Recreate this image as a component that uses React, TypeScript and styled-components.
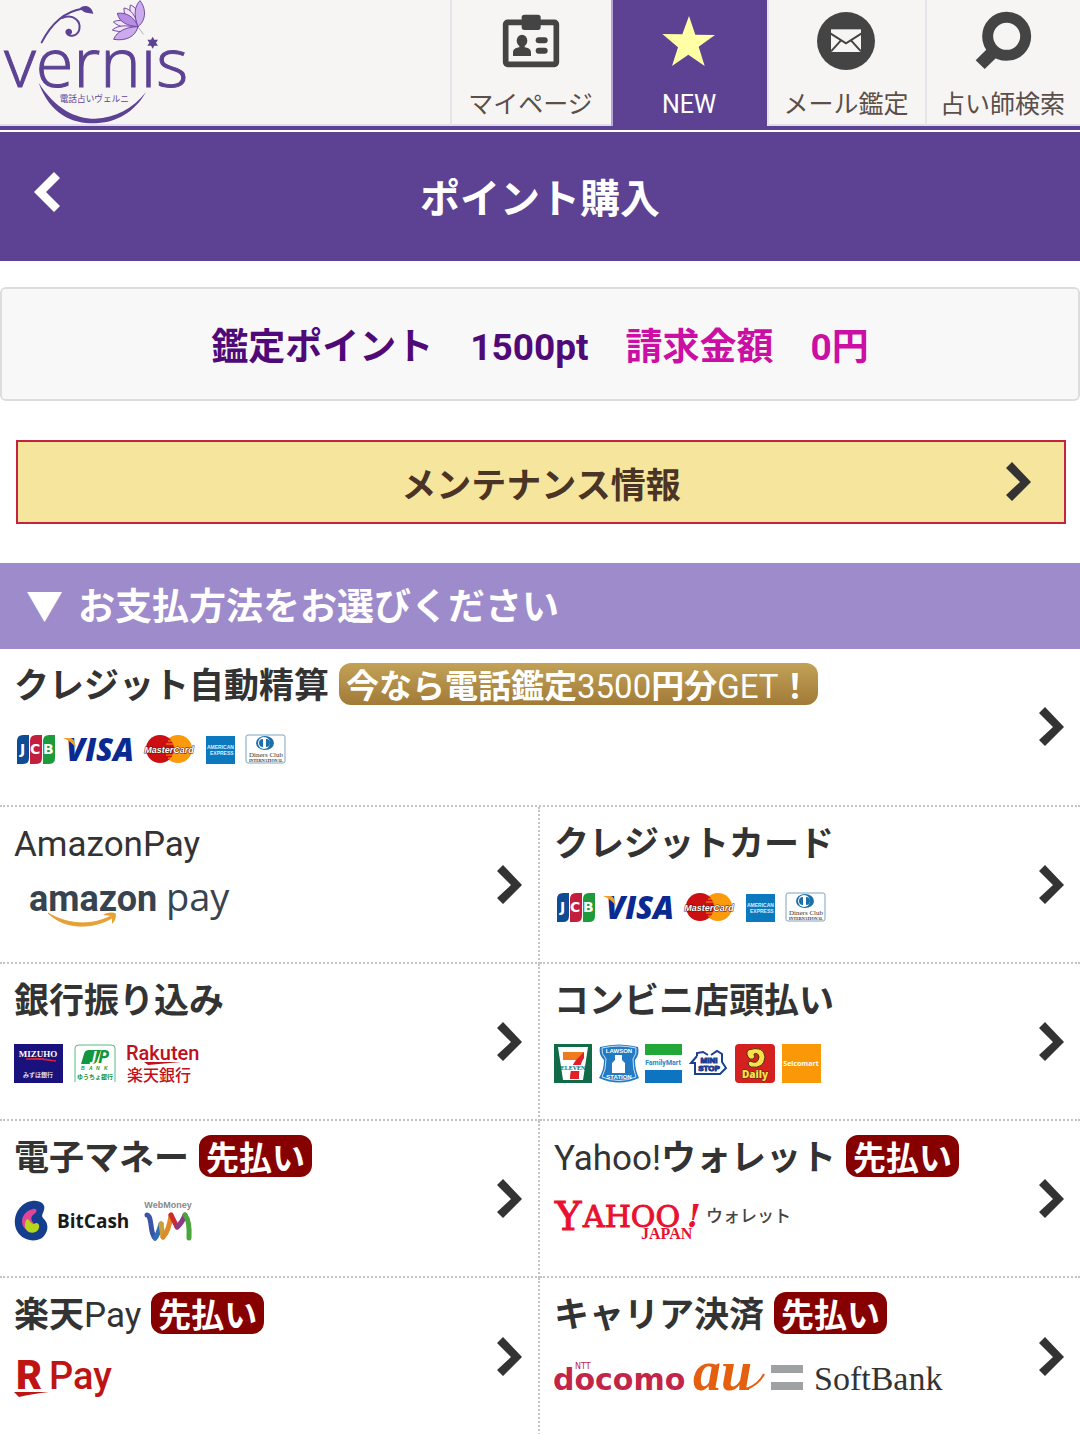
import type { FC, ReactNode } from "react";
import styled, { createGlobalStyle } from "styled-components";

const GlobalStyle = createGlobalStyle`
  * {
    box-sizing: border-box;
  }
  body {
    margin: 0;
    background: #fff;
    color: #333;
    font-family: Roboto, "Noto Sans CJK JP", sans-serif;
  }
  a {
    color: inherit;
    text-decoration: none;
  }
  svg {
    display: block;
    flex: none;
    overflow: visible;
  }
`;

const Header = styled.header`
  display: grid;
  grid-template-columns: 450fr 161fr 156fr 158fr 155fr;
  background: #f6f5f4;
  border-bottom: 4px solid #5d4294;
  margin-bottom: 2px;
`;

const LogoLink = styled.a`
  box-shadow: inset 0 -2px #e0dcec;
`;

const NavItem = styled.a<{ $active?: boolean }>`
  display: flex;
  flex-direction: column;
  align-items: center;
  gap: 20px;
  padding: 12px 2px 6px 0;
  font-size: 25px;
  line-height: 30px;
  white-space: nowrap;
  color: ${(p) => (p.$active ? "#fff" : "#5a4f4a")};
  background: ${(p) => (p.$active ? "#5d4294" : "#f6f5f4")};
  border-left: 2px solid ${(p) => (p.$active ? "#b3a6d2" : "#e6e4e8")};
  box-shadow: ${(p) => (p.$active ? "none" : "inset 0 -2px #e0dcec")};
`;

const TitleBar = styled.div`
  display: grid;
  grid-template-columns: 60px 1fr 60px;
  align-items: center;
  padding: 0 4px;
  height: 129px;
  background: #5d4294;
  color: #fff;
`;

const BackButton = styled.button`
  display: flex;
  align-items: center;
  justify-content: flex-end;
  padding: 0 4px 10px 0;
  border: 0;
  background: none;
  color: inherit;
`;

const PageTitle = styled.h1`
  margin: 0;
  padding-top: 6px;
  text-align: center;
  font-size: 40px;
  line-height: 60px;
`;

const PointBox = styled.p`
  margin: 26px 0 39px;
  padding: 32px 0 24px;
  border: 2px solid #ddd;
  border-radius: 6px;
  background: #f8f8f8;
  text-align: center;
  font-size: 37px;
  line-height: 54px;
  font-weight: 700;
  color: #500a78;
`;

const Amount = styled.span`
  color: #cc0fa4;
`;

const MaintenanceLink = styled.a`
  display: grid;
  grid-template-columns: 58px 1fr 58px;
  align-items: center;
  margin: 0 14px 39px 16px;
  height: 84px;
  border: 2px solid #c4233f;
  background: #f6e59d;
  color: #4a3426;
  font-size: 35px;
  font-weight: 700;
  text-align: center;
`;

const SectionTitle = styled.h2`
  display: flex;
  gap: 15px;
  margin: 0;
  padding: 4px 26px 0;
  background: #9e8bcb;
  color: #fff;
  font-size: 37px;
  line-height: 82px;
`;

const MethodGrid = styled.nav`
  display: grid;
  grid-template-columns: 1fr 1fr;
`;

const MethodLink = styled.a<{ $wide?: boolean }>`
  display: flex;
  align-items: center;
  justify-content: space-between;
  height: ${(p) => (p.$wide ? 158 : 157)}px;
  padding: 0 15px 0 14px;
  border-bottom: 2px dotted #c4c4c4;
  grid-column: ${(p) => (p.$wide ? "1 / -1" : "auto")};

  &:nth-child(even) {
    border-right: 2px dotted #c4c4c4;
  }
  &:nth-last-child(-n + 2) {
    border-bottom: 0;
  }
`;

const MethodBody = styled.div`
  align-self: flex-start;
  display: flex;
  flex-direction: column;
  gap: 20px;
  padding-top: 14px;
`;

const MethodTitle = styled.div`
  display: flex;
  gap: 10px;
  font-size: 35px;
  line-height: 36px;
  font-weight: 700;
  white-space: nowrap;
`;

const Name = styled.span`
  padding-top: 6px;
`;

const Latin = styled.span`
  font-weight: 400;
`;

const Badge = styled.span<{ $gold?: boolean }>`
  padding: 6px 7px 0;
  border-radius: 12px;
  background: ${(p) =>
    p.$gold ? "linear-gradient(#c2a257, #a17a38)" : "#870000"};
  color: #fff;
  font-size: 33px;
`;

const Arrow: FC<{ back?: boolean; color?: string }> = ({
  back,
  color = "#333",
}) => (
  <svg width="26" height="40" viewBox="0 0 26 40" aria-hidden="true">
    <polygon
      points={
        back
          ? "26,6 20,0 0,20 20,40 26,34 12,20"
          : "0,6 6,0 25,20 6,39 0,33 14,20"
      }
      fill={color}
    />
  </svg>
);

const VernisLogo = () => (
  <svg width="190" height="126" viewBox="0 0 570 378" role="img" aria-label="vernis">
    <g fill="none" stroke="#5d4294" strokeLinecap="round">
      <path d="M125 127C147 84 186 36 246 26" strokeWidth="6" />
      <path d="M186 54C222 40 243 64 238 88C233 112 200 112 199 96C200 86 213 88 213 97" strokeWidth="6" />
    </g>
    <circle cx="207" cy="97" r="8" fill="#5d4294" />
    <path d="M240 24C252 12 276 17 280 42C266 38 252 42 240 24Z" fill="#5d4294" />
    <g fill="#cda9ee" stroke="#6b4da0" strokeWidth="3" strokeLinejoin="round">
      <path d="M414 80C396 62 386 40 391 15C402 18 410 28 414 42Z" fill="#f4e2fb" />
      <path d="M414 80C390 74 370 50 372 24C392 26 408 48 414 80Z" fill="#f4e2fb" />
      <path d="M414 80C400 44 404 18 420 2C438 24 440 60 414 80Z" />
      <path d="M414 80C386 88 358 82 340 66C350 60 364 60 376 66Z" fill="#f4e2fb" />
      <path d="M414 80C390 98 360 98 337 90C348 80 366 76 384 78Z" fill="#f4e2fb" />
      <path d="M414 80C384 78 358 68 352 40C380 36 404 52 414 80Z" fill="#b98ce4" />
      <path d="M414 80C406 110 378 124 341 118C350 94 380 80 414 80Z" />
    </g>
    <path d="M414 80L430 103" stroke="#9a8aaa" strokeWidth="2" />
    <text x="13" y="262" fontFamily="Open Sans" fontWeight="300" fontSize="206" fill="#5d4294" stroke="#5d4294" strokeWidth="3">
      vernıs
    </text>
    <path d="M458 110l5 9h11l-6 9 6 9h-11l-5 9-5-9h-11l6-9-6-9h11z" fill="#5d4294" />
    <text x="179" y="306" fontSize="26" fill="#5d4294">
      電話占いヴェルニ
    </text>
    <path d="M116 248C150 345 220 371 285 370C350 368 405 335 438 276C400 325 345 354 285 356C225 356 165 325 116 248Z" fill="#5d4294" />
  </svg>
);

const MyPageIcon = () => (
  <svg width="58" height="58" viewBox="0 0 174 174" fill="#444" aria-hidden="true">
    <rect x="11" y="31" width="152" height="126" rx="6" fill="none" stroke="#444" strokeWidth="17" />
    <rect x="59" y="8" width="57" height="46" rx="8" />
    <ellipse cx="60" cy="86" rx="16" ry="18" />
    <path d="M33 132V122C33 112 40 108 52 106V96H68V106C80 108 87 112 87 122V132Z" />
    <rect x="101" y="76" width="36" height="18" rx="9" />
    <rect x="101" y="107" width="36" height="18" rx="9" />
  </svg>
);

const StarIcon = () => (
  <svg width="58" height="58" viewBox="0 0 174 174" aria-hidden="true">
    <polygon
      points="87,12 106,68 165,69 116,104 134,162 85,128 36,162 54,106 7,66 67,67"
      fill="#ffffa6"
    />
  </svg>
);

const MailIcon = () => (
  <svg width="58" height="58" viewBox="0 0 174 174" aria-hidden="true">
    <circle cx="87" cy="87" r="87" fill="#444" />
    <rect x="42" y="52" width="90" height="68" fill="#f6f5f4" />
    <path d="M40 64L87 94L134 64M42 118L72 85M132 118L102 85" fill="none" stroke="#444" strokeWidth="6" />
  </svg>
);

const SearchIcon = () => (
  <svg width="58" height="58" viewBox="0 0 174 174" aria-hidden="true">
    <circle cx="98" cy="73" r="57" fill="none" stroke="#444" strokeWidth="33" />
    <polygon points="5,145 32,171 70,134 42,108" fill="#444" />
  </svg>
);

const CardLogos = () => (
  <svg width="274" height="44" viewBox="0 0 274 44" role="img" aria-label="JCB VISA MasterCard American Express Diners Club">
    <path d="M3 16Q3 10 9 10H15V33Q15 39 9 39H3Z" fill="#0e4c96" />
    <path d="M16 16Q16 10 22 10H28V33Q28 39 22 39H16Z" fill="#c41e3f" />
    <path d="M29 16Q29 10 35 10H41V33Q41 39 35 39H29Z" fill="#1d9a3a" />
    <text y="29" fontFamily="DejaVu Sans" fontWeight="700" fontSize="14" fill="#fff">
      <tspan x="6">J</tspan>
      <tspan x="16">C</tspan>
      <tspan x="29">B</tspan>
    </text>
    <text x="52" y="36" fontFamily="Open Sans" fontWeight="800" fontStyle="italic" fontSize="31" fill="#0a2a92">
      VISA
    </text>
    <path d="M49 13H57Q60 14 61 19L62 23Q57 16 49 13Z" fill="#f0a028" />
    <circle cx="164" cy="24" r="14" fill="#fb9a0a" />
    <circle cx="146" cy="24" r="14" fill="#cc0f12" />
    <path d="M154 16h7M152 19h8M152 30h8M154 33h7" stroke="#fb9a0a" strokeWidth="1" />
    <text x="155" y="28" textAnchor="middle" fontFamily="Liberation Sans" fontWeight="700" fontStyle="italic" fontSize="9" fill="#fff" stroke="#5c1200" strokeWidth="1" paintOrder="stroke">
      MasterCard
    </text>
    <rect x="192" y="11" width="29" height="28" fill="#0c78be" />
    <g fontFamily="Liberation Sans" fontWeight="700" fontSize="5" fill="#d9efff">
      <text x="193" y="24">AMERICAN</text>
      <text x="196" y="30">EXPRESS</text>
    </g>
    <rect x="232" y="10" width="39" height="28" rx="2" fill="#fff" stroke="#7fa3bf" />
    <ellipse cx="251" cy="18" rx="9" ry="7" fill="#1b70aa" />
    <circle cx="250" cy="18" r="6" fill="#fff" />
    <path d="M249 14A4 4 0 0 0 249 22ZM252 14A4 4 0 0 1 252 22Z" fill="#1b70aa" />
    <text x="252" y="32" textAnchor="middle" fontFamily="Liberation Serif" fontSize="7" fill="#333">
      Diners Club
    </text>
    <text x="252" y="37" textAnchor="middle" fontFamily="Liberation Serif" fontWeight="700" fontSize="4" fill="#333">
      INTERNATIONAL
    </text>
  </svg>
);

const AmazonPayLogo = () => (
  <svg width="222" height="44" viewBox="0 0 222 44" role="img" aria-label="amazon pay">
    <text x="15" y="28" fontWeight="700" fontSize="36" fill="#37434f">
      amazon
    </text>
    <text x="152" y="28" fontFamily="Open Sans" fontSize="38" fill="#37434f">
      pay
    </text>
    <path d="M34 30C52 41 76 44 97 33L98 35C77 47 50 46 34 30Z" fill="#e8a033" stroke="#e8a033" />
    <path d="M89 32C94 29 99 29 102 31C102 35 101 38 98 41L98 33Z" fill="#e8a033" />
  </svg>
);

const BankLogos = () => (
  <svg width="190" height="44" viewBox="0 0 190 44" role="img" aria-label="みずほ銀行 ゆうちょ銀行 楽天銀行">
    <rect y="4" width="49" height="39" fill="#19127c" />
    <text x="24" y="17" textAnchor="middle" fontFamily="Liberation Serif" fontWeight="700" fontSize="9" fill="#fff">
      MIZUHO
    </text>
    <path d="M12 19Q28 17 42 21Q28 19 12 19Z" fill="#e0203c" stroke="#e0203c" />
    <text x="24" y="37" textAnchor="middle" fontSize="6" fontWeight="500" fill="#fff">
      みずほ銀行
    </text>
    <path d="M61 42V8Q61 5 65 5H97Q101 5 101 8V42" fill="none" stroke="#5cb97e" />
    <path d="M70 14Q71 10 75 10H87L83 21Q82 24 78 24H67Z" fill="#12963f" />
    <g fontFamily="Open Sans" fontWeight="700" fontStyle="italic">
      <text x="78" y="21" fontSize="14" fill="#fff">
        J
      </text>
      <text x="84" y="23" fontSize="18" fill="#12963f">
        P
      </text>
    </g>
    <g fontFamily="Liberation Sans" fontWeight="700" fontStyle="italic" fontSize="5" fill="#12963f">
      <text x="67" y="30">B</text>
      <text x="75" y="30">A</text>
      <text x="82" y="30">N</text>
      <text x="90" y="30">K</text>
    </g>
    <text x="81" y="39" textAnchor="middle" fontSize="6" fontWeight="700" fill="#12963f">
      ゆうちょ銀行
    </text>
    <text x="112" y="20" fontWeight="500" fontSize="20" fill="#bf1020">
      Rakuten
    </text>
    <path d="M130 22H167L134 25Z" fill="#bf1020" />
    <text x="113" y="41" fontWeight="500" fontSize="16" fill="#bf1020">
      楽天銀行
    </text>
  </svg>
);

const StoreLogos = () => (
  <svg width="270" height="44" viewBox="0 0 270 44" role="img" aria-label="7-ELEVEN LAWSON FamilyMart MINISTOP Daily Seicomart">
    <rect y="4" width="38" height="39" fill="#116b48" />
    <path d="M4 7H34L29 40H9Z" fill="#fff" />
    <path d="M9 12H30V17L27 20H9Z" fill="#ef7b1f" />
    <path d="M22 20L30 12V18C26 24 25 30 25 39H16C16 31 18 25 22 20Z" fill="#e02128" />
    <rect x="8" y="25" width="22" height="6" fill="#fff" />
    <text x="19" y="30" textAnchor="middle" fontFamily="Liberation Serif" fontWeight="700" fontSize="6" fill="#116b48">
      ELEVEN
    </text>
    <path d="M46 7Q65 2 84 7Q86 14 81 20Q81 30 85 38Q65 47 45 38Q50 30 50 20Q44 14 46 7Z" fill="#2479c3" />
    <path d="M48 8Q65 4 82 8Q83 14 79 19Q79 30 82 37Q65 44 48 37Q52 30 52 19Q47 14 48 8Z" fill="none" stroke="#c8e2f6" strokeWidth="1" />
    <path d="M61 15H68V20L71 23V33H58V23L61 20Z" fill="#fff" />
    <g fontFamily="Liberation Sans" fontWeight="700" fontSize="6" fill="#fff" textAnchor="middle">
      <text x="65" y="13">LAWSON</text>
      <text x="65" y="39">STATION</text>
    </g>
    <rect x="91" y="4" width="37" height="11" fill="#22a838" />
    <rect x="91" y="30" width="37" height="13" fill="#0d74c2" />
    <text x="109" y="25" textAnchor="middle" fontWeight="700" fontSize="7" fill="#2a86c6">
      FamilyMart
    </text>
    <path d="M143 16L137 23H141V34H166L172 28L168 22V14L163 11L157 15M143 16V13L149 12L154 15" fill="none" stroke="#1d3f92" strokeWidth="2" />
    <g fontFamily="Liberation Sans" fontWeight="700" fontSize="8" fill="#1d3f92" stroke="#1d3f92" textAnchor="middle">
      <text x="155" y="23">MINI</text>
      <text x="155" y="31">STOP</text>
    </g>
    <rect x="181" y="4" width="40" height="39" rx="4" fill="#d4201f" />
    <path d="M194 10Q210 5 211 17Q210 29 197 27Q192 24 196 21Q204 25 205 17Q204 12 200 14Q202 20 196 19Q191 15 194 10Z" fill="#f8e04a" stroke="#4d2f10" strokeWidth="1" />
    <text x="201" y="38" textAnchor="middle" fontFamily="Open Sans" fontWeight="800" fontSize="10" fill="#f8e04a" stroke="#4d2f10" strokeWidth="1" paintOrder="stroke">
      Daily
    </text>
    <rect x="228" y="4" width="39" height="39" fill="#fb9807" />
    <text x="247" y="26" textAnchor="middle" fontFamily="Open Sans" fontWeight="700" fontSize="7" fill="#fff">
      Seicomart
    </text>
  </svg>
);

const EMoneyLogos = () => (
  <svg width="182" height="44" viewBox="0 0 182 44" role="img" aria-label="BitCash WebMoney">
    <path d="M18 4C26 3 32 7 30 13C29 17 27 18 29 21C36 27 34 36 28 41C20 46 8 43 3 34C-3 22 4 6 18 4Z" fill="#153f8e" />
    <path d="M19 12C23 11 24 15 20 17C16 20 17 23 20 27C17 34 12 35 9 29C6 22 10 14 19 12Z" fill="#e0459b" />
    <path d="M12 23C15 20 16 27 20 27C24 24 27 29 24 33C20 38 10 36 11 27Z" fill="#b6d71c" />
    <text x="43" y="31" fontFamily="Open Sans" fontWeight="700" fontSize="19" fill="#1a1a1a">
      BitCash
    </text>
    <text x="154" y="11" textAnchor="middle" fontFamily="Liberation Sans" fontWeight="700" fontSize="9" fill="#888">
      WebMoney
    </text>
    <g fill="none" strokeWidth="5" strokeLinecap="round" strokeLinejoin="round">
      <path d="M133 18Q136 18 137 28T141 41" stroke="#3a55a8" />
      <path d="M141 41Q144 38 147 27" stroke="#2e6fb8" />
      <path d="M147 27L149 40" stroke="#c9a03a" />
      <path d="M149 40Q155 34 157 18" stroke="#e08a28" />
      <path d="M157 18L163 30" stroke="#cf2a2e" />
      <path d="M163 30Q168 26 171 18" stroke="#8b3a86" />
      <path d="M171 18Q176 24 175 41" stroke="#4aa63c" />
    </g>
  </svg>
);

const YahooLogo = () => (
  <svg width="240" height="44" viewBox="0 0 240 44" role="img" aria-label="Yahoo! JAPAN ウォレット">
    <g fontFamily="DejaVu Serif" fill="#e8112f">
      <text x="1" y="33" fontSize="40" stroke="#e8112f" strokeWidth="1">
        Y
      </text>
      <text x="29" y="30" fontSize="30" stroke="#e8112f" strokeWidth="1">
        AHOO
      </text>
      <text x="133" y="30" fontSize="31" fontWeight="700" fontStyle="italic">
        !
      </text>
    </g>
    <text x="87" y="42" fontFamily="Liberation Serif" fontWeight="700" fontSize="16" fill="#e8112f">
      JAPAN
    </text>
    <text x="152" y="25" fontWeight="500" fontSize="17" fill="#444">
      ウォレット
    </text>
  </svg>
);

const RakutenPayLogo = () => (
  <svg width="102" height="44" viewBox="0 0 102 44" role="img" aria-label="R Pay">
    <g fill="#bf1414">
      <text x="2" y="35" fontWeight="900" fontSize="40">
        R
      </text>
      <path d="M0 38H35Q18 40 5 43Z" />
      <text x="35" y="35" fontWeight="500" fontSize="38">
        Pay
      </text>
    </g>
  </svg>
);

const CarrierLogos = () => (
  <svg width="392" height="44" viewBox="0 0 392 44" role="img" aria-label="NTT docomo au SoftBank">
    <text x="-1" y="36" fontFamily="DejaVu Sans" fontWeight="700" fontSize="30" fill="#c22548">
      docomo
    </text>
    <text x="21" y="15" fontFamily="DejaVu Sans" fontSize="8" fill="#c22548">
      NTT
    </text>
    <text x="139" y="36" fontFamily="Liberation Serif" fontWeight="700" fontStyle="italic" fontSize="56" fill="#e4600f">
      au
    </text>
    <path d="M193 35Q205 30 210 20" fill="none" stroke="#e4600f" strokeWidth="2" />
    <rect x="217" y="11" width="32" height="8" fill="#9fa2a2" />
    <rect x="217" y="28" width="32" height="8" fill="#9fa2a2" />
    <text x="260" y="36" fontFamily="Liberation Serif" fontSize="34" fill="#333">
      SoftBank
    </text>
  </svg>
);

interface MethodProps {
  name: ReactNode;
  badge?: ReactNode;
  wide?: boolean;
  children: ReactNode;
}

const Method: FC<MethodProps> = ({ name, badge, wide, children }) => (
  <MethodLink href="#" $wide={wide}>
    <MethodBody>
      <MethodTitle>
        <Name>{name}</Name>
        {badge}
      </MethodTitle>
      {children}
    </MethodBody>
    <Arrow />
  </MethodLink>
);

const Prepaid = () => <Badge>先払い</Badge>;

const App = () => {
  return (
    <div lang="ja">
      <GlobalStyle />
      <Header>
        <LogoLink href="#">
          <VernisLogo />
        </LogoLink>
        <NavItem href="#">
          <MyPageIcon />
          マイページ
        </NavItem>
        <NavItem href="#" $active>
          <StarIcon />
          NEW
        </NavItem>
        <NavItem href="#">
          <MailIcon />
          メール鑑定
        </NavItem>
        <NavItem href="#">
          <SearchIcon />
          占い師検索
        </NavItem>
      </Header>
      <TitleBar>
        <BackButton type="button" aria-label="戻る">
          <Arrow back color="#fff" />
        </BackButton>
        <PageTitle>ポイント購入</PageTitle>
      </TitleBar>
      <main>
        <PointBox>
          鑑定ポイント　1500pt　<Amount>請求金額　0円</Amount>
        </PointBox>
        <MaintenanceLink href="#">
          <span />
          メンテナンス情報
          <Arrow />
        </MaintenanceLink>
        <SectionTitle>
          <span>▼</span>
          お支払方法をお選びください
        </SectionTitle>
        <MethodGrid>
          <Method
            wide
            name="クレジット自動精算"
            badge={
              <Badge $gold>
                今なら電話鑑定<Latin>3500</Latin>円分<Latin>GET</Latin>！
              </Badge>
            }
          >
            <CardLogos />
          </Method>
          <Method name={<Latin>AmazonPay</Latin>}>
            <AmazonPayLogo />
          </Method>
          <Method name="クレジットカード">
            <CardLogos />
          </Method>
          <Method name="銀行振り込み">
            <BankLogos />
          </Method>
          <Method name="コンビニ店頭払い">
            <StoreLogos />
          </Method>
          <Method name="電子マネー" badge={<Prepaid />}>
            <EMoneyLogos />
          </Method>
          <Method
            name={
              <>
                <Latin>Yahoo!</Latin>ウォレット
              </>
            }
            badge={<Prepaid />}
          >
            <YahooLogo />
          </Method>
          <Method
            name={
              <>
                楽天<Latin>Pay</Latin>
              </>
            }
            badge={<Prepaid />}
          >
            <RakutenPayLogo />
          </Method>
          <Method name="キャリア決済" badge={<Prepaid />}>
            <CarrierLogos />
          </Method>
        </MethodGrid>
      </main>
    </div>
  );
};

export default App;
